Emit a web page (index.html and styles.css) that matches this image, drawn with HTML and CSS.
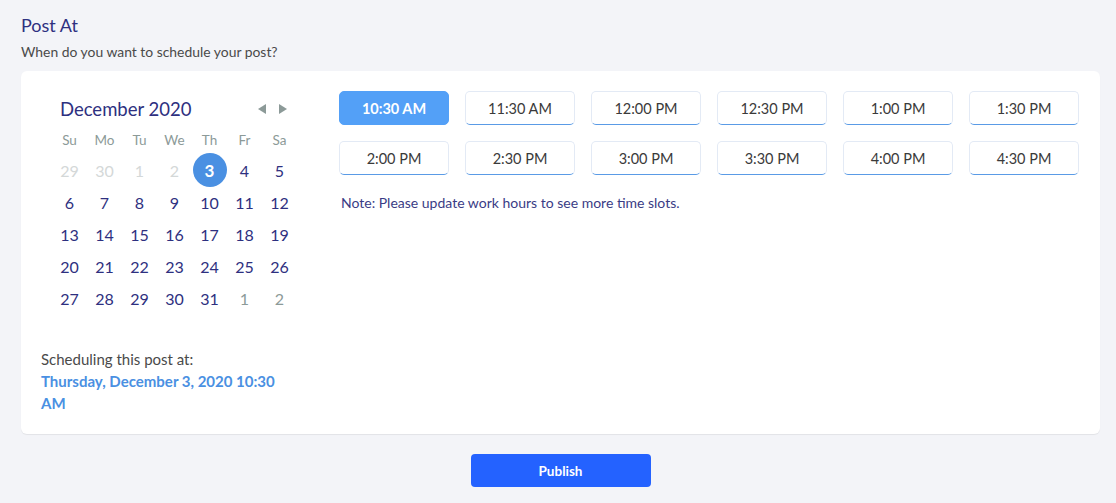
FILE: index.html
```html
<!DOCTYPE html>
<html>
<head>
<meta charset="utf-8">
<link rel="stylesheet" href="styles.css">
</head>
<body>
<div class="page">
  <h1 class="title">Post At</h1>
  <p class="subtitle">When do you want to schedule your post?</p>
  <div class="card">
    <div class="left">
      <div class="cal-head">
        <span class="month">December 2020</span>
        <span class="arrows">
          <svg width="8" height="10" viewBox="0 0 8 10"><path d="M8 0 L0 5 L8 10 Z" fill="#8c9a98"/></svg>
          <svg width="8" height="10" viewBox="0 0 8 10"><path d="M0 0 L8 5 L0 10 Z" fill="#8c9a98"/></svg>
        </span>
      </div>
      <div class="grid">
        <span class="wd">Su</span><span class="wd">Mo</span><span class="wd">Tu</span><span class="wd">We</span><span class="wd">Th</span><span class="wd">Fr</span><span class="wd">Sa</span>
        <span class="d off">29</span><span class="d off">30</span><span class="d off">1</span><span class="d off">2</span><span class="d sel"><b>3</b></span><span class="d">4</span><span class="d">5</span>
        <span class="d">6</span><span class="d">7</span><span class="d">8</span><span class="d">9</span><span class="d">10</span><span class="d">11</span><span class="d">12</span>
        <span class="d">13</span><span class="d">14</span><span class="d">15</span><span class="d">16</span><span class="d">17</span><span class="d">18</span><span class="d">19</span>
        <span class="d">20</span><span class="d">21</span><span class="d">22</span><span class="d">23</span><span class="d">24</span><span class="d">25</span><span class="d">26</span>
        <span class="d">27</span><span class="d">28</span><span class="d">29</span><span class="d">30</span><span class="d">31</span><span class="d next">1</span><span class="d next">2</span>
      </div>
      <div class="sched">
        <div class="sched-label">Scheduling this post at:</div>
        <div class="sched-value">Thursday, December 3, 2020 10:30 AM</div>
      </div>
    </div>
    <div class="right">
      <div class="slots">
        <button class="slot active">10:30 AM</button>
        <button class="slot">11:30 AM</button>
        <button class="slot">12:00 PM</button>
        <button class="slot">12:30 PM</button>
        <button class="slot">1:00 PM</button>
        <button class="slot">1:30 PM</button>
        <button class="slot">2:00 PM</button>
        <button class="slot">2:30 PM</button>
        <button class="slot">3:00 PM</button>
        <button class="slot">3:30 PM</button>
        <button class="slot">4:00 PM</button>
        <button class="slot">4:30 PM</button>
      </div>
      <p class="note">Note: Please update work hours to see more time slots.</p>
    </div>
  </div>
  <div class="actions">
    <button class="publish">Publish</button>
  </div>
</div>
</body>
</html>
```

FILE: styles.css
```css
* { box-sizing: border-box; }
html, body { margin: 0; padding: 0; }
body {
  background: #f3f4f8;
  font-family: Lato, "Liberation Sans", sans-serif;
  width: 1116px;
  height: 503px;
  overflow: hidden;
}
.page { padding: 13px 16px 0 21px; }
.title {
  margin: 0;
  font-size: 18px;
  font-weight: 400;
  color: #2e3080;
  line-height: 24px;
}
.subtitle {
  margin: 6px 0 0;
  font-size: 13.9px;
  color: #4a4a4a;
  line-height: 18px;
}
.card {
  margin-top: 10px;
  background: #fff;
  border-radius: 6px;
  box-shadow: 0 1px 1px rgba(0,0,0,0.07);
  display: flex;
  padding: 20px 21px 20px 20px;
  height: 363px;
}
.left { width: 278px; flex: none; }
.cal-head {
  height: 34px;
  display: flex;
  align-items: center;
  justify-content: space-between;
  padding: 2px 32px 0 19px;
}
.month { font-size: 18.5px; color: #2e3080; }
.arrows { display: flex; gap: 13px; align-items: center; }
.arrows svg { display: block; }
.grid {
  margin-left: 11px;
  width: 245px;
  display: grid;
  grid-template-columns: repeat(7, 35px);
  grid-auto-rows: 32px;
  grid-template-rows: 29px;
}
.wd {
  font-size: 13.5px;
  color: #8c9a98;
  display: flex;
  align-items: center;
  justify-content: center;
}
.d {
  font-size: 16px;
  color: #2e3080;
  display: flex;
  align-items: center;
  justify-content: center;
}
.d.off { color: #d4d8d8; }
.d.next { color: #8c9a98; }
.d.sel b {
  width: 34px;
  height: 34px;
  border-radius: 50%;
  background: #4a90e2;
  color: #fff;
  font-weight: 700;
  display: flex;
  align-items: center;
  justify-content: center;
  font-size: 17px;
}
.sched { margin-top: 34px; width: 252px; }
.sched-label { font-size: 15px; color: #4a4a4a; line-height: 22px; }
.sched-value { font-size: 15px; color: #4a90e2; font-weight: 700; line-height: 22px; }
.right { flex: 1; padding-left: 20px; }
.slots {
  display: grid;
  grid-template-columns: repeat(6, 110px);
  grid-auto-rows: 34px;
  column-gap: 16px;
  row-gap: 16px;
}
.slot {
  font-family: inherit;
  font-size: 14.5px;
  color: #3a3a3a;
  background: #fff;
  border: 1px solid #e3eaf5;
  border-bottom: 1px solid #5a9be6;
  border-radius: 5px;
  padding: 0;
}
.slot.active {
  background: #53a0f7;
  border-color: #53a0f7;
  color: #fff;
  font-weight: 700;
}
.note {
  margin: 19px 0 0 2px;
  font-size: 14px;
  color: #3a3c85;
  line-height: 18px;
}
.actions {
  display: flex;
  justify-content: center;
  margin-top: 20px;
}
.publish {
  width: 180px;
  height: 33px;
  background: #2462ff;
  color: #fff;
  border: none;
  border-radius: 4px;
  font-family: inherit;
  font-size: 13.5px;
  font-weight: 700;
}
```
